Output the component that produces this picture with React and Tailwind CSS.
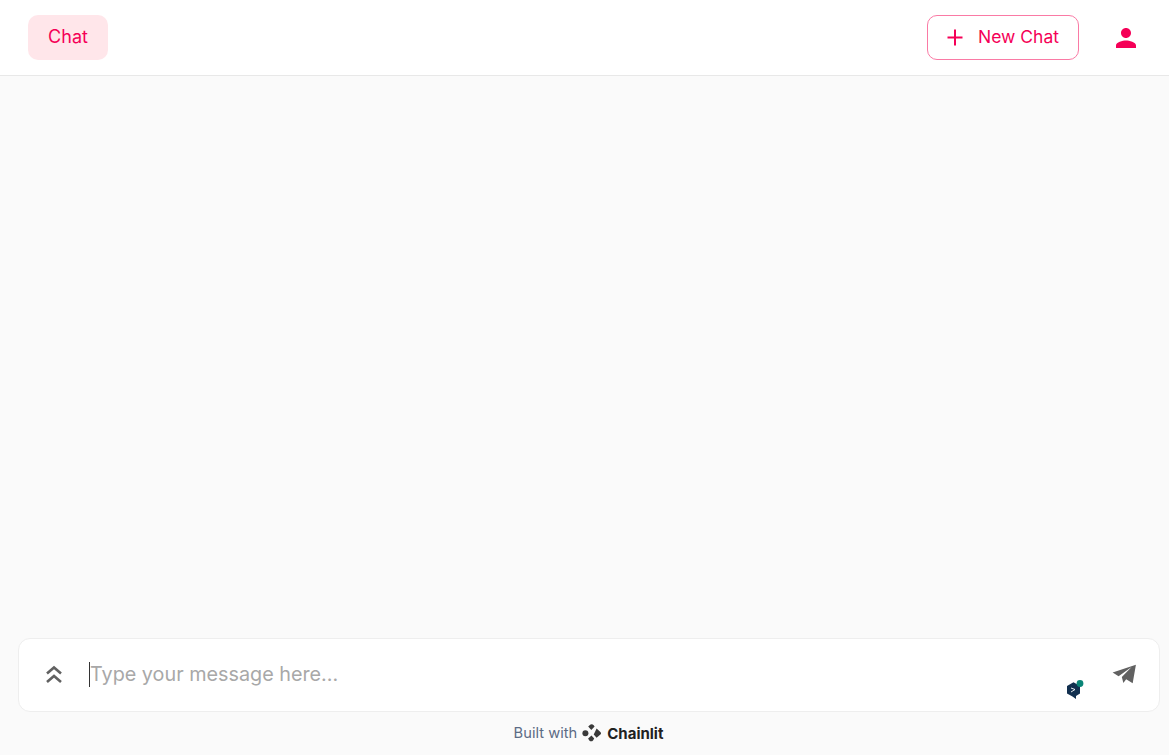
import React from 'react';

function Header() {
  return (
    <header className="flex items-center justify-between h-[76px] pl-7 pr-[26px] bg-white border-b border-[#e8e8e8] shrink-0">
      <button className="h-[45px] w-[80px] rounded-[10px] bg-[#ffe6ea] text-[#f50057] text-[18px] leading-none pb-[2px]">
        Chat
      </button>
      <div className="flex items-center">
        <button className="flex items-center h-[45px] w-[152px] pl-[17px] pb-[2px] rounded-[10px] border border-[#fa7aa5] text-[#f50057] text-[17.5px] leading-none">
          <svg width="20" height="20" viewBox="0 0 20 20" fill="none" stroke="#f50057" strokeWidth="2" className="mr-[13px]">
            <path d="M10 2.5v16M2.5 10.5h15" />
          </svg>
          New Chat
        </button>
        <div className="ml-[30px] w-[34px] flex justify-center">
          <svg viewBox="0 0 24 24" fill="#f50057" className="w-[30px] h-[30px]">
            <path d="M12 12c2.21 0 4-1.79 4-4s-1.79-4-4-4-4 1.79-4 4 1.79 4 4 4zm0 2c-2.67 0-8 1.34-8 4v2h16v-2c0-2.66-5.33-4-8-4z" />
          </svg>
        </div>
      </div>
    </header>
  );
}

function ChatInput() {
  return (
    <div className="relative ml-[18px] mr-[9px] h-[74px] flex items-center bg-white border border-[#eeeeee] rounded-[12px] pl-[23px] pr-[22px] shrink-0">
      <svg viewBox="0 0 24 24" fill="none" stroke="#616161" strokeWidth="2.6" className="shrink-0 w-[24px] h-[24px]">
        <path d="M5 10.5l7-6 7 6" />
        <path d="M5 19l7-6 7 6" />
      </svg>
      <div className="ml-[23px] flex-1 flex items-center -mt-[1px]">
        <span className="w-px h-[25px] bg-[#333333]" />
        <span className="text-[#a8a8a8] text-[19.8px] leading-none">Type your message here...</span>
      </div>
      <svg viewBox="0 0 24 24" fill="#616161" className="shrink-0 w-[26px] h-[26px] -mt-[2px]">
        <path d="M1.5 10.5 23 3.5l-3 17-6-3.7-2.6 3.4-1.4-5.4 9-9.3L7 14z" />
      </svg>
      {/* extension badge over the field */}
      <div className="absolute left-[1047px] top-[41px] w-[19px] h-[20px]">
        <svg width="19" height="20" viewBox="0 0 19 20">
          <path d="M1 6 7.5 2.2 14 6v7.5L10 16v3L6.5 16.5 1 13.5z" fill="#12304f" />
          <path d="M5 8l4 1.5M5 12l4-2.5" stroke="#ffffff" strokeWidth="0.9" fill="none" />
          <circle cx="14" cy="3.5" r="3.4" fill="#0a8577" />
        </svg>
      </div>
    </div>
  );
}

function Footer() {
  return (
    <div className="h-[43px] flex items-center justify-center shrink-0 pl-[8px] pb-[1px]">
      <span className="text-[14.7px] text-[#5c6b85] leading-none">Built with</span>
      <svg width="20" height="20" viewBox="0 0 20 20" fill="#3a3a3a" className="ml-[5px]">
        <path d="M7.6 2.2c1.2-1.3 2.9-1.3 4.1 0l.9 1.2-3.3 3.6-3.1-3.4z" />
        <path d="M14.6 5.6l3.8 3.3c.9.8.9 1.8 0 2.6l-3.8 3.3-2.9-3.2 1-2z" />
        <path d="M9.5 12.6l2.7 3-1.2 1.8c-1.1 1.2-2.6 1.2-3.7 0l-1.2-1.8z" />
        <circle cx="3.4" cy="10.2" r="3" />
      </svg>
      <span className="ml-[5px] text-[15px] font-bold text-[#212121] leading-none">Chainlit</span>
    </div>
  );
}

export default function App() {
  return (
    <div className="h-[755px] flex flex-col bg-[#fafafa] font-['Inter',sans-serif] overflow-hidden">
      <Header />
      <main className="flex-1" />
      <ChatInput />
      <Footer />
    </div>
  );
}
